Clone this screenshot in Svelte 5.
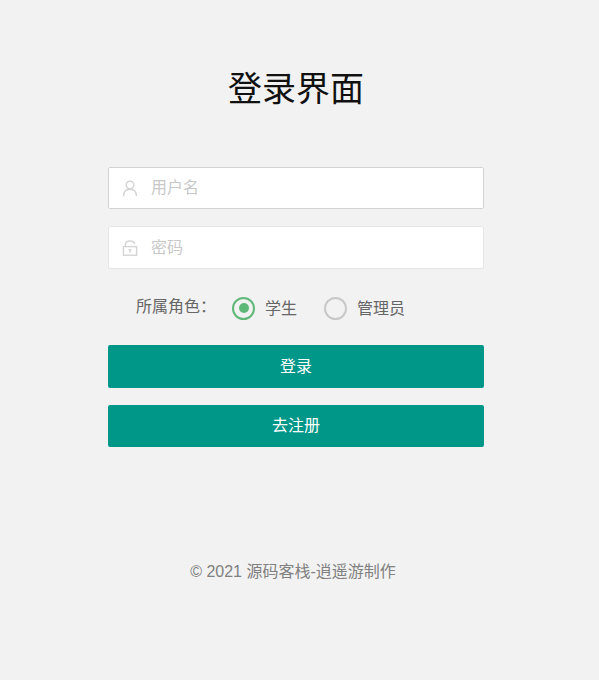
<script>
  let role = 'student';
  let username = '';
  let password = '';
</script>

<div class="page">
  <h1 class="title">登录界面</h1>

  <form class="login-form" on:submit|preventDefault>
    <label class="field field-focus">
      <svg class="icon" viewBox="0 0 16 16" width="16" height="16" fill="none" stroke="#d4d4d4" stroke-width="1.5">
        <circle cx="8" cy="5" r="3.8" />
        <path d="M1.6 16c0-4.2 2.4-6.8 6.4-6.8s6.4 2.6 6.4 6.8" />
      </svg>
      <input type="text" placeholder="用户名" bind:value={username} />
    </label>

    <label class="field">
      <svg class="icon" viewBox="0 0 16 16" width="16" height="16" fill="none" stroke="#d4d4d4" stroke-width="1.4">
        <rect x="1.4" y="6.6" width="13.2" height="8.6" />
        <path d="M3.4 6.6V4.4C3.4 2.2 5.6 1 8 1s4.6 1.2 4.6 3.2" />
        <path d="M8 10.2v2.6M6.6 9.8h2.8" />
      </svg>
      <input type="password" placeholder="密码" bind:value={password} />
    </label>

    <div class="role-row">
      <span class="role-label">所属角色：</span>
      <button type="button" class="radio" class:checked={role === 'student'} on:click={() => (role = 'student')}>
        <span class="dot"></span>
        <span class="radio-text">学生</span>
      </button>
      <button type="button" class="radio" class:checked={role === 'admin'} on:click={() => (role = 'admin')}>
        <span class="dot"></span>
        <span class="radio-text">管理员</span>
      </button>
    </div>

    <button type="submit" class="btn">登录</button>
    <button type="button" class="btn">去注册</button>
  </form>

  <p class="footer">© 2021 源码客栈-逍遥游制作</p>
</div>

<style>
  :global(body) {
    background: #f2f2f2;
    font-family: "Liberation Sans", "Noto Sans CJK SC", sans-serif;
  }

  .page {
    width: 376px;
    height: 680px;
    margin-left: 108px;
    padding-top: 66px;
    box-sizing: border-box;
    overflow: hidden;
  }

  .title {
    margin: 0 0 55px;
    font-size: 34px;
    font-weight: 400;
    line-height: 46px;
    text-align: center;
    color: #111;
  }

  .login-form {
    display: flex;
    flex-direction: column;
  }

  .field {
    display: flex;
    align-items: center;
    height: 43px;
    margin-bottom: 17px;
    padding-left: 13px;
    box-sizing: border-box;
    background: #fff;
    border: 1px solid #e6e6e6;
    border-radius: 2px;
  }

  .field-focus {
    height: 42px;
    border-color: #d2d2d2;
  }

  .icon {
    flex: none;
    margin-right: 13px;
  }

  input {
    flex: 1;
    min-width: 0;
    height: 100%;
    padding: 0;
    border: 0;
    outline: 0;
    background: transparent;
    font: inherit;
    font-size: 16px;
    color: #333;
  }

  input::placeholder {
    color: #c8c8c8;
    opacity: 1;
  }

  .role-row {
    display: flex;
    align-items: center;
    height: 42px;
    margin: 1px 0 16px;
    padding-left: 28px;
    font-size: 16px;
    color: #666;
  }

  .role-label {
    width: 96px;
    padding-bottom: 7px;
  }

  .radio {
    display: flex;
    align-items: center;
    gap: 10px;
    margin-right: 27px;
    padding: 0;
    border: 0;
    background: none;
    font: inherit;
    color: inherit;
    cursor: pointer;
  }

  .radio-text {
    padding-bottom: 2px;
  }

  .dot {
    position: relative;
    width: 23px;
    height: 23px;
    box-sizing: border-box;
    border: 2px solid #c8c8c8;
    border-radius: 50%;
  }

  .radio.checked .dot {
    border-color: #5fb878;
  }

  .radio.checked .dot::after {
    content: "";
    position: absolute;
    top: 4.5px;
    left: 4.5px;
    width: 10px;
    height: 10px;
    border-radius: 50%;
    background: #5fb878;
  }

  .btn {
    height: 43px;
    margin-bottom: 17px;
    padding: 0 0 4px;
    border: 0;
    border-radius: 2px;
    background: #009688;
    font: inherit;
    font-size: 16px;
    color: #fff;
    cursor: pointer;
  }

  .btn:last-child {
    height: 42px;
    margin-bottom: 0;
  }

  .footer {
    margin: 115px 0 0;
    padding-right: 6px;
    font-size: 16px;
    line-height: 20px;
    text-align: center;
    color: #808080;
  }
</style>
